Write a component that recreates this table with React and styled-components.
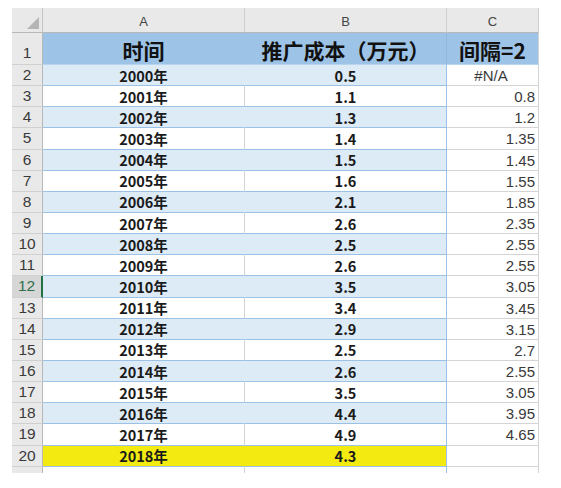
import styled, { createGlobalStyle } from "styled-components";

const GlobalStyle = createGlobalStyle`
  html, body {
    margin: 0;
    padding: 0;
    background: #ffffff;
  }
  body {
    font-family: "Liberation Sans", "Noto Sans CJK SC", sans-serif;
  }
`;

const rows = [
  ["2000年", "0.5", "#N/A"],
  ["2001年", "1.1", "0.8"],
  ["2002年", "1.3", "1.2"],
  ["2003年", "1.4", "1.35"],
  ["2004年", "1.5", "1.45"],
  ["2005年", "1.6", "1.55"],
  ["2006年", "2.1", "1.85"],
  ["2007年", "2.6", "2.35"],
  ["2008年", "2.5", "2.55"],
  ["2009年", "2.6", "2.55"],
  ["2010年", "3.5", "3.05"],
  ["2011年", "3.4", "3.45"],
  ["2012年", "2.9", "3.15"],
  ["2013年", "2.5", "2.7"],
  ["2014年", "2.6", "2.55"],
  ["2015年", "3.5", "3.05"],
  ["2016年", "4.4", "3.95"],
  ["2017年", "4.9", "4.65"],
  ["2018年", "4.3", ""],
];

const fills = {
  light: "#ddebf7",
  white: "#ffffff",
  yellow: "#f2ea10",
};

export default function App() {
  return (
    <>
      <GlobalStyle />
      <Page>
        <Sheet>
          <Corner>
            <Triangle />
          </Corner>
          <ColHead>A</ColHead>
          <ColHead>B</ColHead>
          <ColHead>C</ColHead>

          <RowHead $tall>1</RowHead>
          <TitleCell>时间</TitleCell>
          <TitleCell $edge>推广成本（万元）</TitleCell>
          <TitleCell $last>间隔=2</TitleCell>

          {rows.map(([year, cost, gap], i) => {
            const n = i + 2;
            const fill =
              n === 20 ? "yellow" : n % 2 === 0 ? "light" : "white";
            return [
              <RowHead key={`h${n}`} $active={n === 12}>
                {n}
              </RowHead>,
              <DataCell key={`a${n}`} $fill={fill}>
                {year}
              </DataCell>,
              <DataCell key={`b${n}`} $fill={fill} $edge>
                {cost}
              </DataCell>,
              <GapCell key={`c${n}`} $center={gap === "#N/A"}>
                {gap}
              </GapCell>,
            ];
          })}

          <RowHead $stub />
          <StubCell />
          <StubCell $edge />
          <StubCell />
        </Sheet>
      </Page>
    </>
  );
}

const Page = styled.div`
  padding: 8px 0 0 12px;
`;

const Sheet = styled.div`
  display: grid;
  grid-template-columns: 31px 202px 202px 92px;
  grid-template-rows: 25px 32px repeat(19, 21.15px) 6px;
  width: 527px;
`;

const Corner = styled.div`
  position: relative;
  background: #e9e9e9;
  border-right: 1px solid #c4c4c4;
  border-bottom: 1px solid #b8b8b8;
  box-sizing: border-box;
`;

const Triangle = styled.div`
  position: absolute;
  right: 3px;
  bottom: 3px;
  width: 0;
  height: 0;
  border-left: 12px solid transparent;
  border-bottom: 12px solid #b5b5b5;
`;

const ColHead = styled.div`
  background: #e9e9e9;
  border-right: 1px solid #cfcfcf;
  border-bottom: 1px solid #b8b8b8;
  box-sizing: border-box;
  display: flex;
  align-items: flex-end;
  justify-content: center;
  padding-bottom: 3px;
  font-size: 13px;
  color: #444;
`;

const RowHead = styled.div`
  background: ${(p) => (p.$active ? "#d6d6d6" : "#e9e9e9")};
  border-right: ${(p) => (p.$active ? "2px solid #217346" : "1px solid #b8b8b8")};
  border-bottom: ${(p) => (p.$stub ? "none" : "1px solid #d0d0d0")};
  box-sizing: border-box;
  display: flex;
  align-items: ${(p) => (p.$tall ? "flex-end" : "center")};
  justify-content: center;
  padding-bottom: ${(p) => (p.$tall ? "2px" : "0")};
  font-size: 15.5px;
  color: ${(p) => (p.$active ? "#2f6f4a" : "#3a3a3a")};
  overflow: hidden;
`;

const TitleCell = styled.div`
  background: #9dc3e6;
  border-right: 1px solid
    ${(p) => (p.$edge ? "#8fb8df" : p.$last ? "#d4d4d4" : "#9dc3e6")};
  border-bottom: 1px solid #b9d4ee;
  box-sizing: border-box;
  display: flex;
  align-items: flex-end;
  justify-content: center;
  overflow: hidden;
  font-family: "Noto Sans CJK SC", "Liberation Sans", sans-serif;
  font-weight: 700;
  font-size: 21px;
  line-height: 28px;
  color: #111;
  white-space: nowrap;
`;

const DataCell = styled.div`
  background: ${(p) => fills[p.$fill]};
  border-right: 1px solid
    ${(p) => (p.$edge ? "#9bc2e6" : p.$fill === "white" ? "#d4d4d4" : fills[p.$fill])};
  border-bottom: 1px solid #9bc2e6;
  box-sizing: border-box;
  display: flex;
  align-items: center;
  justify-content: center;
  overflow: hidden;
  font-family: "Noto Sans CJK SC", "Liberation Sans", sans-serif;
  font-weight: 700;
  font-size: 14.5px;
  line-height: 19px;
  color: #1a1a1a;
  white-space: nowrap;
`;

const GapCell = styled.div`
  background: #ffffff;
  border-right: 1px solid #d4d4d4;
  border-bottom: 1px solid #d4d4d4;
  box-sizing: border-box;
  display: flex;
  align-items: center;
  justify-content: ${(p) => (p.$center ? "center" : "flex-end")};
  padding: 1px 3px 0 0;
  font-size: 15px;
  color: #3a3a3a;
  white-space: nowrap;
`;

const StubCell = styled.div`
  background: #ffffff;
  border-right: 1px solid ${(p) => (p.$edge ? "#9bc2e6" : "#d4d4d4")};
  box-sizing: border-box;
`;
